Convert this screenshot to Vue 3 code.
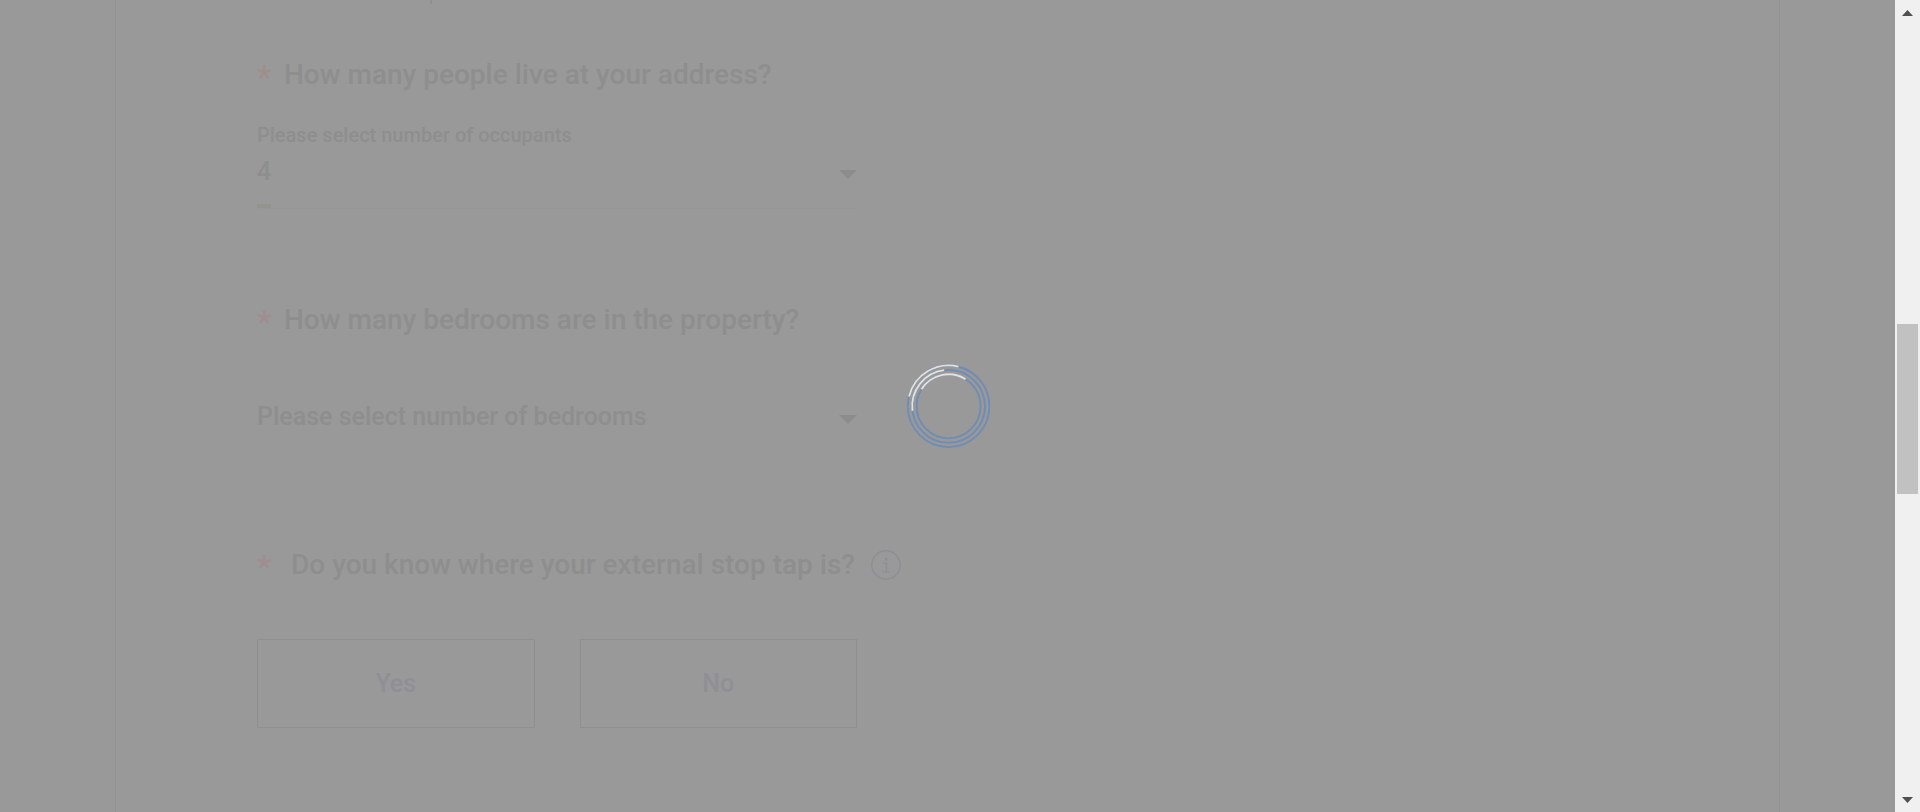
<script setup>
import { ref } from 'vue'

const occupants = ref('4')
const bedrooms = ref('')
const stopTap = ref('')
const bedroomOptions = ['1', '2', '3', '4', '5']
</script>

<template>
  <div class="screen">
    <main class="page">
      <form class="panel" @submit.prevent>
        <div class="previous" aria-hidden="true"></div>

        <section class="question">
          <h2 class="title"><span class="star">*</span><span>How many people live at your address?</span></h2>
          <div class="field">
            <label class="caption" for="occupants">Please select number of occupants</label>
            <div class="control">
              <select id="occupants" v-model="occupants">
                <option v-for="n in 8" :key="n" :value="String(n)">{{ n }}</option>
              </select>
              <svg class="caret" viewBox="0 0 18 9"><path d="M0 0h18L9 9z" /></svg>
            </div>
            <div class="underline"><i></i></div>
          </div>
        </section>

        <section class="question">
          <h2 id="bedrooms-title" class="title"><span class="star">*</span><span>How many bedrooms are in the property?</span></h2>
          <div class="field plain">
            <div class="control">
              <select id="bedrooms" v-model="bedrooms" aria-labelledby="bedrooms-title">
                <option value="">Please select number of bedrooms</option>
                <option v-for="n in bedroomOptions" :key="n" :value="n">{{ n }}</option>
              </select>
              <svg class="caret" viewBox="0 0 18 9"><path d="M0 0h18L9 9z" /></svg>
            </div>
          </div>
        </section>

        <section class="question">
          <h2 class="title">
            <span class="star wide">*</span><span>Do you know where your external stop tap is?</span>
            <button class="info" type="button" aria-label="More information">
              <svg viewBox="0 0 30 30">
                <circle cx="15" cy="15" r="14.2" />
                <path d="M11.5 13h4v9M11 22h8" />
                <rect x="14" y="8" width="2.5" height="2.5" />
              </svg>
            </button>
          </h2>
          <div class="choices">
            <button type="button" class="choice" @click="stopTap = 'yes'">Yes</button>
            <button type="button" class="choice" @click="stopTap = 'no'">No</button>
          </div>
        </section>
      </form>

      <div class="overlay" role="status" aria-label="Loading">
        <svg class="spinner" viewBox="0 0 84 84">
          <g class="ring">
            <circle cx="42.6" cy="42.3" r="40.8" />
            <circle cx="42.6" cy="42.3" r="36.4" />
            <circle cx="42.6" cy="42.3" r="32" />
          </g>
          <g class="arc">
            <circle cx="42.6" cy="42.3" r="40.8" pathLength="360" transform="rotate(194 42.6 42.3)" />
            <circle cx="42.6" cy="42.3" r="36.4" pathLength="360" transform="rotate(173 42.6 42.3)" />
            <circle cx="42.6" cy="42.3" r="32" pathLength="360" transform="rotate(212 42.6 42.3)" />
          </g>
        </svg>
      </div>
    </main>

    <div class="scrollbar" aria-hidden="true">
      <svg class="arrow" viewBox="0 0 11 6"><path d="M0 6L5.5 0L11 6z" /></svg>
      <div class="thumb"></div>
      <svg class="arrow" viewBox="0 0 11 6"><path d="M0 0h11L5.5 6z" /></svg>
    </div>
  </div>
</template>

<style>
body {
  margin: 0;
  background: #999;
}
</style>

<style scoped>
.screen {
  display: flex;
  height: 100vh;
  overflow: hidden;
  background: #999;
  color: #8e8e8e;
  font-family: Roboto, "Noto Sans", sans-serif;
  font-weight: 500;
}
.page {
  position: relative;
  flex: 1;
  padding: 0 115px;
  overflow: hidden;
}
.panel {
  min-height: 100%;
  box-sizing: border-box;
  padding: 0 141px;
  border: solid #939393;
  border-width: 0 1px;
}
.previous {
  width: 2px;
  height: 4px;
  margin-left: 173px;
  background: #909090;
}
.question {
  height: 245px;
}
.previous + .question {
  padding-top: 51px;
}
.title {
  display: flex;
  align-items: center;
  height: 40px;
  margin: 0;
  font-size: 28px;
  font-weight: 500;
  line-height: 40px;
  white-space: nowrap;
}
.star {
  width: 27px;
  padding-top: 4px;
  color: #9f8e8e;
  font-size: 34px;
  font-weight: 400;
}
.star.wide {
  width: 34px;
}
.info {
  width: 30px;
  height: 30px;
  margin-left: 16px;
  padding: 0;
  border: 0;
  background: none;
}
.info svg {
  display: block;
  fill: none;
  stroke: #8e8f94;
  stroke-width: 1.5;
}
.info path {
  stroke: #8c9095;
}
.info rect {
  fill: #8c9095;
  stroke: none;
}
.field {
  max-width: 600px;
  padding-top: 25px;
}
.field.plain {
  padding-top: 57px;
}
.caption {
  display: block;
  height: 32px;
  font-size: 20px;
  line-height: 30px;
}
.control {
  position: relative;
  height: 40px;
}
.control select {
  width: 100%;
  height: 40px;
  padding: 0;
  border: 0;
  outline: 0;
  appearance: none;
  background: none;
  color: inherit;
  font: 500 25px/40px Roboto, "Noto Sans", sans-serif;
}
.caret {
  position: absolute;
  top: 18px;
  right: 0;
  width: 18px;
  height: 9px;
  fill: #8c8c8c;
  pointer-events: none;
}
.underline {
  height: 4px;
  margin-top: 12px;
  border-bottom: 1px solid #979797;
}
.underline i {
  display: block;
  width: 14px;
  height: 4px;
  background: #92958d;
}
.choices {
  display: flex;
  gap: 45px;
  max-width: 600px;
  padding-top: 54px;
}
.choice {
  flex: 1;
  height: 89px;
  border: 1px solid #8f8f92;
  background: none;
  color: #8f8f95;
  font: 500 25px/40px Roboto, "Noto Sans", sans-serif;
}
.overlay {
  position: absolute;
  inset: 0;
  display: flex;
  align-items: center;
  justify-content: center;
}
.spinner {
  width: 84px;
  height: 84px;
  fill: none;
  stroke-width: 1.8;
}
.ring {
  stroke: #6e8cb6;
}
.arc {
  stroke: #e2e2e0;
  stroke-dasharray: 90 270;
}
.scrollbar {
  display: grid;
  grid-template-rows: 25px 299fr 170fr 293fr 25px;
  justify-items: center;
  width: 25px;
  background: #f0f0f0;
}
.arrow {
  align-self: center;
  width: 11px;
  height: 6px;
  fill: #505050;
}
.thumb {
  grid-row: 3;
  width: 21px;
  background: #c1c1c1;
}
.thumb + .arrow {
  grid-row: 5;
}
</style>
